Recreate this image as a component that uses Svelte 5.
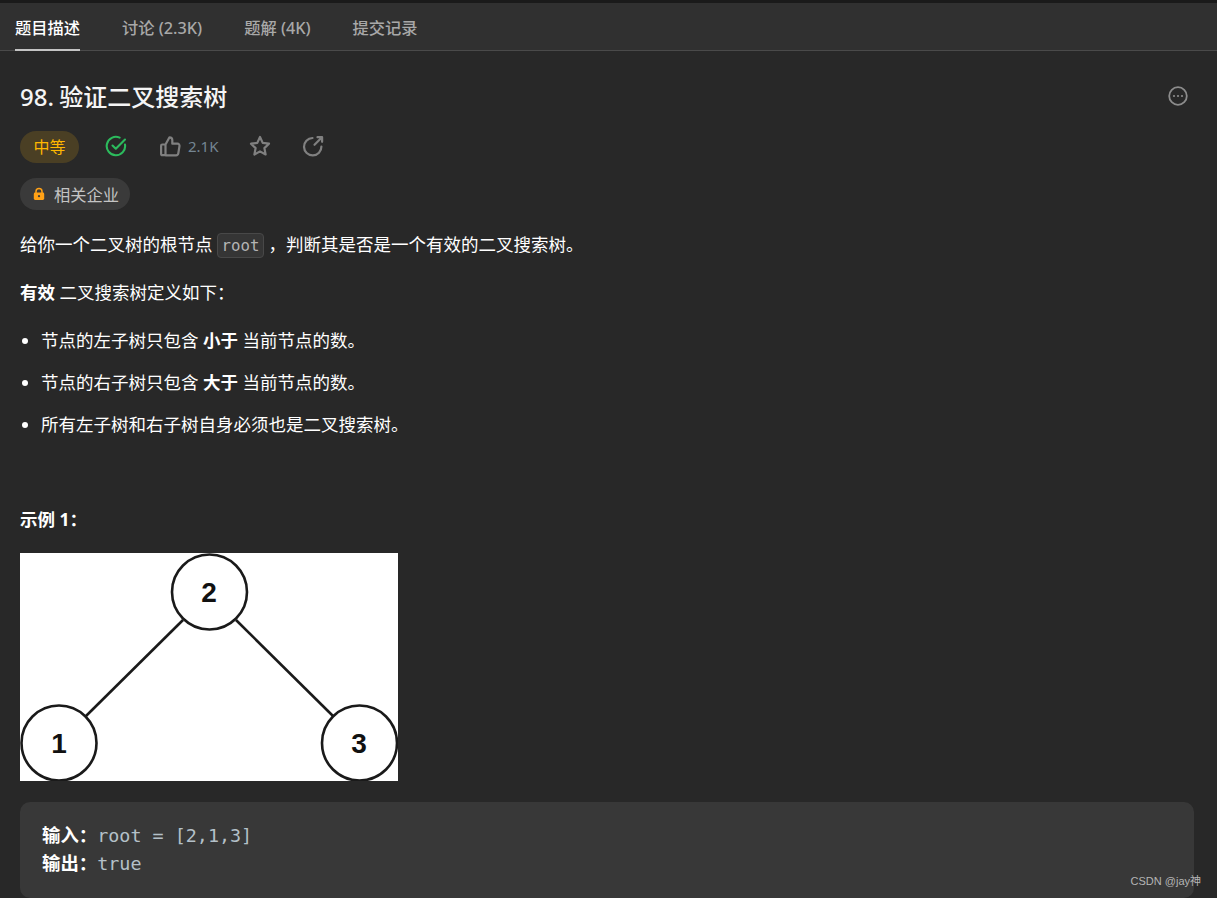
<script>
  const tabs = [
    { label: "题目描述", active: true },
    { label: "讨论 (2.3K)" },
    { label: "题解 (4K)" },
    { label: "提交记录" },
  ];
  const rules = [
    ["节点的左子树只包含 ", "小于", " 当前节点的数。"],
    ["节点的右子树只包含 ", "大于", " 当前节点的数。"],
    ["所有左子树和右子树自身必须也是二叉搜索树。", "", ""],
  ];
</script>

<div class="page">
  <nav class="tabs">
    {#each tabs as tab}
      <div class="tab" class:active={tab.active}>{tab.label}</div>
    {/each}
  </nav>

  <main class="content">
    <div class="title-row">
      <h1>98. 验证二叉搜索树</h1>
      <svg class="more" viewBox="0 0 20 20" width="20" height="20">
        <circle cx="10" cy="10" r="8.8" fill="none" stroke="#8c8c8c" stroke-width="1.8" />
        <circle cx="6" cy="10" r="1.1" fill="#8c8c8c" />
        <circle cx="10" cy="10" r="1.1" fill="#8c8c8c" />
        <circle cx="14" cy="10" r="1.1" fill="#8c8c8c" />
      </svg>
    </div>

    <div class="meta">
      <span class="level">中等</span>
      <svg class="solved" viewBox="0 0 22 22" width="22" height="22" fill="none" stroke="#2cbb5d" stroke-width="2.1" stroke-linecap="round" stroke-linejoin="round">
        <path d="M20 9.6A9.2 9.2 0 1 1 14.6 2.6" />
        <path d="M7.5 10.5l3.3 3.2L20 4.6" />
      </svg>
      <span class="like">
        <svg viewBox="0 0 22 22" width="22" height="22" fill="none" stroke="#808080" stroke-width="2.2" stroke-linejoin="round" stroke-linecap="round">
          <path d="M6.5 9.5v10.7H3.3a1.2 1.2 0 0 1-1.2-1.2v-8.3a1.2 1.2 0 0 1 1.2-1.2h3.2l4-7.2c1.6 0 2.8 1.2 2.8 2.8v3.6h5.2a2 2 0 0 1 2 2.3l-1.2 7.4a2.3 2.3 0 0 1-2.3 1.9H6.5" />
        </svg>
        <span class="count">2.1K</span>
      </span>
      <svg class="star" viewBox="0 0 22 22" width="22" height="22" fill="none" stroke="#808080" stroke-width="2.2" stroke-linejoin="round">
        <path d="M11 2l2.7 5.9 6.3.8-4.6 4.4 1.2 6.4L11 16.4l-5.6 3.1 1.2-6.4L2 8.7l6.3-.8z" />
      </svg>
      <svg class="share" viewBox="0 0 22 22" width="22" height="22" fill="none" stroke="#808080" stroke-width="2.2" stroke-linecap="round" stroke-linejoin="round">
        <path d="M19.4 11.500A8.700 8.700 0 1 1 10.500 3" />
        <path d="M15.500 2.200h4.600v4.600M20 2.300l-7.500 7.500" />
      </svg>
    </div>

    <div class="company">
      <svg viewBox="0 0 14 14" width="14" height="14">
        <path d="M4 6V4.4a3 3 0 0 1 6 0V6" fill="none" stroke="#ffa116" stroke-width="1.5" />
        <rect x="1.8" y="5.600" width="10.400" height="7.400" rx="1.400" fill="#ffa116" />
        <circle cx="7" cy="9.200" r="1.100" fill="#3a3a3a" />
      </svg>
      <span>相关企业</span>
    </div>

    <p class="intro">给你一个二叉树的根节点 <code>root</code> ，判断其是否是一个有效的二叉搜索树。</p>
    <p class="def"><strong>有效</strong> 二叉搜索树定义如下：</p>

    <ul>
      {#each rules as r}
        <li>{r[0]}<strong>{r[1]}</strong>{r[2]}</li>
      {/each}
    </ul>

    <p class="example"><strong>示例 1：</strong></p>

    <svg class="tree" viewBox="0 0 378 228" width="378" height="228">
      <rect width="378" height="228" fill="#fff" />
      <g stroke="#1a1a1a" stroke-width="2.600" fill="none">
        <line x1="163" y1="67" x2="66" y2="163" />
        <line x1="216" y1="67" x2="313" y2="163" />
        <circle cx="189.500" cy="39" r="37.500" />
        <circle cx="39" cy="190" r="37.500" />
        <circle cx="339.500" cy="190" r="37.500" />
      </g>
      <g class="digits" text-anchor="middle" fill="#111">
        <text x="189" y="49">2</text>
        <text x="39" y="200">1</text>
        <text x="339" y="200">3</text>
      </g>
    </svg>

    <pre class="sample"><strong>输入：</strong>root = [2,1,3]
<strong>输出：</strong>true</pre>
  </main>

  <div class="watermark">CSDN @jay神</div>
</div>

<style>
  :global(body) {
    margin: 0;
    background: #282828;
  }

  .page {
    position: relative;
    height: 898px;
    overflow: hidden;
    background: #282828;
    color: #fff;
    font-family: "Noto Sans", "Noto Sans CJK SC", sans-serif;
    font-size: 17.5px;
  }

  .tabs {
    display: flex;
    gap: 42px;
    height: 47px;
    padding-left: 15px;
    background: #303030;
    border-top: 3px solid #1a1a1a;
    border-bottom: 1px solid #4a4a4a;
  }

  .tab {
    display: flex;
    align-items: center;
    height: 47px;
    box-sizing: border-box;
    padding-top: 1px;
    font-size: 16.25px;
    font-weight: 500;
    color: #a8a8a8;
  }

  .tab.active {
    color: #fff;
    border-bottom: 2px solid #c4c4c4;
    height: 48px;
  }

  .content {
    padding: 0 23px 0 20px;
  }

  .title-row {
    display: flex;
    justify-content: space-between;
    align-items: center;
    height: 34px;
    margin-top: 29px;
  }

  h1 {
    margin: 0;
    font-size: 24px;
    font-weight: 500;
    line-height: 34px;
    word-spacing: -1px;
    color: #f5f5f5;
  }

  .more {
    margin-right: 6px;
    margin-top: -2px;
  }

  .meta {
    display: flex;
    align-items: center;
    height: 32px;
    margin-top: 17px;
  }

  .level {
    width: 59px;
    height: 32px;
    line-height: 32px;
    border-radius: 16px;
    text-align: center;
    font-size: 16px;
    color: #ffb800;
    background: #4a3f24;
  }

  .solved {
    margin-left: 26px;
    margin-top: -2px;
  }

  .like {
    display: flex;
    align-items: center;
    margin-left: 32px;
    margin-top: -2px;
  }

  .count {
    margin-left: 7px;
    font-size: 15px;
    color: #748592;
  }

  .star {
    margin-left: 31px;
    margin-top: -2px;
  }

  .share {
    margin-left: 31px;
    margin-top: -2px;
  }

  .company {
    display: inline-flex;
    align-items: center;
    gap: 8px;
    height: 32px;
    margin-top: 15px;
    padding: 0 11px 0 12px;
    border-radius: 16px;
    background: #3a3a3a;
    color: #c4c4c4;
    font-size: 16.25px;
  }

  p {
    margin: 0;
    line-height: 26px;
  }

  .intro {
    margin-top: 21px;
  }

  code {
    display: inline-block;
    height: 25px;
    line-height: 23px;
    box-sizing: border-box;
    padding: 0 3.5px;
    border: 1px solid #484848;
    border-radius: 4px;
    background: #353535;
    color: #b4b4b4;
    font-family: "DejaVu Sans Mono", monospace;
    font-size: 15.75px;
  }

  .def {
    margin-top: 21px;
  }

  strong {
    font-weight: 700;
  }

  ul {
    margin: 22px 0 0;
    padding: 0 0 0 21px;
  }

  li {
    height: 26px;
    line-height: 26px;
    margin-bottom: 16px;
  }

  .example {
    margin-top: 69px;
  }

  .tree {
    display: block;
    margin-top: 21px;
  }

  .digits {
    font-family: "Liberation Sans", sans-serif;
    font-size: 28px;
    font-weight: 700;
  }

  .sample {
    box-sizing: border-box;
    height: 96px;
    margin: 21px 0 0;
    padding: 19px 22px;
    border-radius: 10px;
    background: #383838;
    color: #b4c0c8;
    font-family: "DejaVu Sans Mono", "Noto Sans CJK SC", monospace;
    font-size: 18.4px;
    line-height: 27px;
  }

  .sample strong {
    color: #fff;
    font-family: "Noto Sans", "Noto Sans CJK SC", sans-serif;
  }

  .watermark {
    position: absolute;
    right: 16px;
    bottom: 10px;
    font-family: "Liberation Sans", "Noto Sans CJK SC", sans-serif;
    font-size: 11px;
    color: #b5b5b5;
  }
</style>
